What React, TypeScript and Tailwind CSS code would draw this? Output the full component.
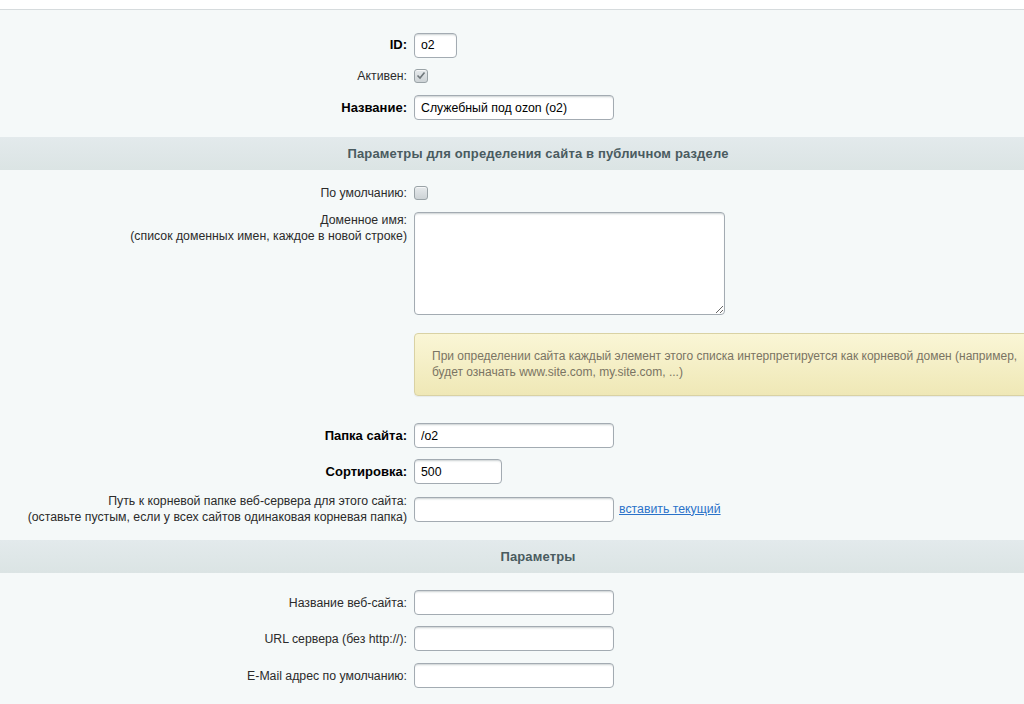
import React from "react";

const inputCls =
  "h-[25px] rounded-[4px] border border-[#a3abb2] bg-white px-[6px] text-[12.3px] text-[#000] shadow-[inset_0_2px_2px_-1px_rgba(180,188,191,0.7)] outline-none";

function Row({
  label,
  bold,
  children,
  className = "",
  top = false,
}: {
  label: React.ReactNode;
  bold?: boolean;
  children: React.ReactNode;
  className?: string;
  top?: boolean;
}) {
  return (
    <div className={`grid grid-cols-[414px_1fr] ${top ? "items-start" : "items-center"} ${className}`}>
      <div
        className={`pr-[7px] text-right leading-[16px] ${
          bold ? "text-[13px] font-bold text-[#000]" : "text-[12.3px] text-[#2b2b2b]"
        }`}
      >
        {label}
      </div>
      <div className="flex items-center">{children}</div>
    </div>
  );
}

function Checkbox({ checked }: { checked?: boolean }) {
  return (
    <span className="flex h-[14px] w-[14px] items-center justify-center rounded-[3px] border border-[#9aa3a7] bg-gradient-to-b from-[#e6eaec] to-[#cdd3d6] shadow-[inset_0_1px_0_rgba(255,255,255,0.6)]">
      {checked && (
        <svg width="10" height="9" viewBox="0 0 10 9">
          <path d="M1.5 4.5 L4 7 L8.5 1.5" fill="none" stroke="#6f777b" strokeWidth="1.6" />
        </svg>
      )}
    </span>
  );
}

function Header({ children, className = "" }: { children: React.ReactNode; className?: string }) {
  return (
    <div
      className={`flex h-[33px] items-center justify-center bg-gradient-to-b from-[#e3eaec] to-[#dbe4e4] text-[13px] font-bold tracking-[0.15px] text-[#4a5b5f] ${className}`}
    >
      {children}
    </div>
  );
}

export default function App() {
  return (
    <div
      className="h-[704px] w-[1024px] overflow-hidden bg-[#f5f9f9]"
      style={{ fontFamily: '"Liberation Sans", Arial, sans-serif' }}
    >
      <div className="h-[10px] border-b border-[#d6dbdd] bg-white" />
      <div className="flex w-[1076px] flex-col">
        <Row label="ID:" bold className="mt-[19px] h-[32px]">
          <input className={`${inputCls} w-[43px]`} defaultValue="o2" readOnly />
        </Row>
        <Row label="Активен:" className="h-[29px]">
          <Checkbox checked />
        </Row>
        <Row label="Название:" bold className="h-[35px]">
          <input className={`${inputCls} w-[200px]`} defaultValue="Служебный под ozon (o2)" readOnly />
        </Row>
        <Header className="mt-[12px]">Параметры для определения сайта в публичном разделе</Header>
        <Row label="По умолчанию:" className="mt-[10px] h-[26px]">
          <Checkbox />
        </Row>
        <Row
          label={
            <>
              Доменное имя:
              <br />
              (список доменных имен, каждое в новой строке)
            </>
          }
          top
          className="mt-[6px]"
        >
          <textarea
            className="h-[103px] w-[311px] rounded-[4px] border border-[#a3abb2] bg-white px-[6px] py-[4px] text-[12px] shadow-[inset_0_2px_2px_-1px_rgba(180,188,191,0.7)] outline-none"
            readOnly
          />
        </Row>
        <div className="mt-[18px] grid grid-cols-[414px_1fr]">
          <div />
          <div className="w-[720px] rounded-[4px] border border-[#d9d2a4] bg-gradient-to-b from-[#faf6d6] to-[#efe8b6] pb-[15px] pl-[17px] pt-[14px] text-[12px] leading-[16px] text-[#7a7463] shadow-[0_1px_1px_rgba(0,0,0,0.06)]">
            При определении сайта каждый элемент этого списка интерпретируется как корневой домен (например,
            <br />
            будет означать www.site.com, my.site.com, ...)
          </div>
        </div>
        <Row label="Папка сайта:" bold className="mt-[27px]">
          <input className={`${inputCls} w-[200px]`} defaultValue="/o2" readOnly />
        </Row>
        <Row label="Сортировка:" bold className="mt-[11px]">
          <input className={`${inputCls} w-[88px]`} defaultValue="500" readOnly />
        </Row>
        <Row
          label={
            <>
              Путь к корневой папке веб-сервера для этого сайта:
              <br />
              (оставьте пустым, если у всех сайтов одинаковая корневая папка)
            </>
          }
          className="mt-[9px]"
        >
          <input className={`${inputCls} w-[200px]`} readOnly />
          <a className="ml-[5px] text-[12.3px] text-[#2a72c9] underline" href="#">
            вставить текущий
          </a>
        </Row>
        <Header className="mt-[15px]">Параметры</Header>
        <Row label="Название веб-сайта:" className="mt-[17px]">
          <input className={`${inputCls} w-[200px]`} readOnly />
        </Row>
        <Row label="URL сервера (без http://):" className="mt-[11px]">
          <input className={`${inputCls} w-[200px]`} readOnly />
        </Row>
        <Row label="E-Mail адрес по умолчанию:" className="mt-[12px]">
          <input className={`${inputCls} w-[200px]`} readOnly />
        </Row>
      </div>
    </div>
  );
}
